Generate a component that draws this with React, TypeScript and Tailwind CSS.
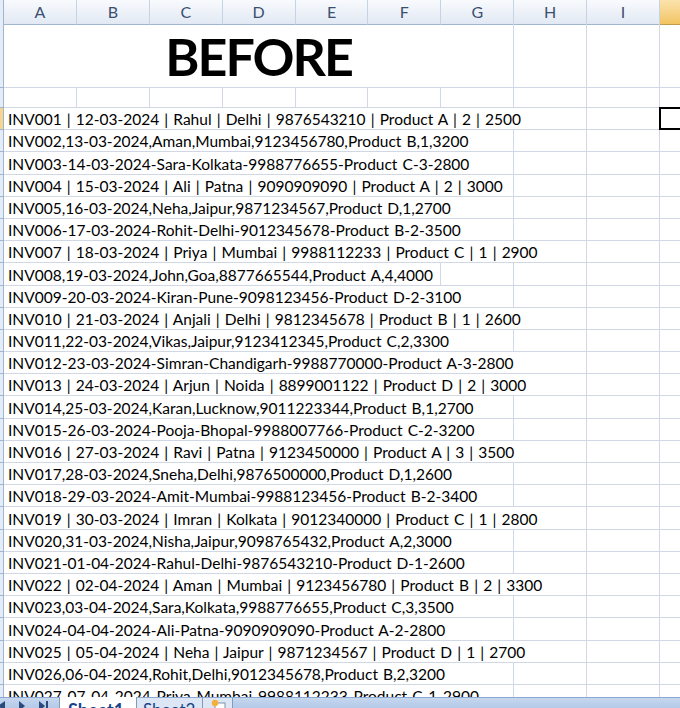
import React from 'react';

const COLS = ['A', 'B', 'C', 'D', 'E', 'F', 'G', 'H', 'I'];

const ROWS = [
  'INV001 | 12-03-2024 | Rahul | Delhi | 9876543210 | Product A | 2 | 2500',
  'INV002,13-03-2024,Aman,Mumbai,9123456780,Product B,1,3200',
  'INV003-14-03-2024-Sara-Kolkata-9988776655-Product C-3-2800',
  'INV004 | 15-03-2024 | Ali | Patna | 9090909090 | Product A | 2 | 3000',
  'INV005,16-03-2024,Neha,Jaipur,9871234567,Product D,1,2700',
  'INV006-17-03-2024-Rohit-Delhi-9012345678-Product B-2-3500',
  'INV007 | 18-03-2024 | Priya | Mumbai | 9988112233 | Product C | 1 | 2900',
  'INV008,19-03-2024,John,Goa,8877665544,Product A,4,4000',
  'INV009-20-03-2024-Kiran-Pune-9098123456-Product D-2-3100',
  'INV010 | 21-03-2024 | Anjali | Delhi | 9812345678 | Product B | 1 | 2600',
  'INV011,22-03-2024,Vikas,Jaipur,9123412345,Product C,2,3300',
  'INV012-23-03-2024-Simran-Chandigarh-9988770000-Product A-3-2800',
  'INV013 | 24-03-2024 | Arjun | Noida | 8899001122 | Product D | 2 | 3000',
  'INV014,25-03-2024,Karan,Lucknow,9011223344,Product B,1,2700',
  'INV015-26-03-2024-Pooja-Bhopal-9988007766-Product C-2-3200',
  'INV016 | 27-03-2024 | Ravi | Patna | 9123450000 | Product A | 3 | 3500',
  'INV017,28-03-2024,Sneha,Delhi,9876500000,Product D,1,2600',
  'INV018-29-03-2024-Amit-Mumbai-9988123456-Product B-2-3400',
  'INV019 | 30-03-2024 | Imran | Kolkata | 9012340000 | Product C | 1 | 2800',
  'INV020,31-03-2024,Nisha,Jaipur,9098765432,Product A,2,3000',
  'INV021-01-04-2024-Rahul-Delhi-9876543210-Product D-1-2600',
  'INV022 | 02-04-2024 | Aman | Mumbai | 9123456780 | Product B | 2 | 3300',
  'INV023,03-04-2024,Sara,Kolkata,9988776655,Product C,3,3500',
  'INV024-04-04-2024-Ali-Patna-9090909090-Product A-2-2800',
  'INV025 | 05-04-2024 | Neha | Jaipur | 9871234567 | Product D | 1 | 2700',
  'INV026,06-04-2024,Rohit,Delhi,9012345678,Product B,2,3200',
  'INV027-07-04-2024-Priya-Mumbai-9988112233-Product C-1-2900',
];

const gridCols = 'grid grid-cols-[4px_repeat(9,72.9px)_1fr]';

function RowHead({ active }: { active?: boolean }) {
  return (
    <div
      className={
        'border-r border-b border-[#9eb6ce] ' +
        (active ? 'bg-[#f8d58f]' : 'bg-[#e4ecf7]')
      }
    />
  );
}

function Cells() {
  return (
    <>
      {COLS.map((c) => (
        <div key={c} className="border-r border-b border-[#d0d7e5]" />
      ))}
    </>
  );
}

function DataRow({ text, index }: { text: string; index: number }) {
  const first = index === 0;
  return (
    <div className={gridCols + ' h-[22.2px] shrink-0'}>
      <div className="col-start-1 row-start-1 flex">
        <div className={'flex-1 border-r border-b border-[#9eb6ce] ' + (first ? 'bg-[#f8d58f]' : 'bg-[#e4ecf7]')} />
      </div>
      {COLS.map((c, i) => (
        <div
          key={c}
          className="row-start-1 border-r border-b border-[#d0d7e5]"
          style={{ gridColumnStart: i + 2 }}
        />
      ))}
      <div className="col-start-11 row-start-1 border-b border-[#d0d7e5] relative">
        {first && <div className="absolute -top-px -left-px w-[40px] -bottom-px border-2 border-black" />}
      </div>
      <div className="col-start-2 col-end-12 row-start-1 justify-self-start mb-px bg-white relative z-10 pl-[4px] pr-px flex items-end whitespace-nowrap text-[15.5px] leading-[20px] [word-spacing:1.15px] text-black">
        {text}
      </div>
    </div>
  );
}

export default function App() {
  return (
    <div className="w-[680px] h-[708px] overflow-hidden bg-white flex flex-col font-['Lato','Noto_Sans',sans-serif]">
      <div className="h-[697px] shrink-0 overflow-hidden flex flex-col">
        {/* column headers */}
        <div className={gridCols + ' h-[22px] shrink-0'}>
          <div className="bg-[#e4ecf7] border-r border-b border-[#9eb6ce]" />
          {COLS.map((c) => (
            <div
              key={c}
              className="bg-gradient-to-b from-[#f8fafd] to-[#e2e9f4] border-r border-b border-[#9eb6ce] border-r-[#c5d3e4] flex items-center justify-center text-[16px] text-[#3a5070]"
            >
              {c}
            </div>
          ))}
          <div className="bg-gradient-to-b from-[#fbe3ad] to-[#f2c460] border-b border-[#c29a4b]" />
        </div>

        {/* title row (A1:G1 merged) */}
        <div className={gridCols + ' h-[66px] shrink-0'}>
          <RowHead />
          <div className="col-start-2 col-end-9 border-r border-b border-[#d0d7e5] flex items-center justify-center pt-[3px]">
            <span className="font-['Lato','Open_Sans',sans-serif] font-bold text-[52px] leading-none tracking-[-2px] text-black">
              BEFORE
            </span>
          </div>
          <div className="border-r border-b border-[#d0d7e5]" />
          <div className="border-r border-b border-[#d0d7e5]" />
          <div className="border-b border-[#d0d7e5]" />
        </div>

        {/* empty row 2 */}
        <div className={gridCols + ' h-[20px] shrink-0'}>
          <RowHead />
          <Cells />
          <div className="border-b border-[#d0d7e5]" />
        </div>

        {ROWS.map((r, i) => (
          <DataRow key={i} text={r} index={i} />
        ))}
      </div>

      {/* sheet tabs */}
      <div className="h-[20px] shrink-0 flex items-start bg-gradient-to-b from-[#c6d7ee] to-[#a3bde2] border-t border-[#8aa8d2]">
        <div className="w-[62px] h-full flex items-start pt-[3px] gap-[12px] -ml-[3px] text-[#2a4a7e]">
          <svg width="9" height="10" viewBox="0 0 9 10"><path d="M8 0 L1 5 L8 10 Z" fill="currentColor" /></svg>
          <svg width="8" height="10" viewBox="0 0 8 10"><path d="M1 0 L7 5 L1 10 Z" fill="currentColor" /></svg>
          <svg width="11" height="10" viewBox="0 0 11 10"><path d="M1 0 L7 5 L1 10 Z" fill="currentColor" /><rect x="8" y="0" width="2" height="10" fill="currentColor" /></svg>
        </div>
        <div className="h-full w-[78px] pl-[8px] bg-white border-x border-[#7f9db9] -mt-px flex items-start">
          <span className="text-[18px] font-bold text-[#15428b] leading-[20px] mt-[3px]">Sheet1</span>
        </div>
        <div className="h-full w-[66px] pl-[6px] bg-[#dce6f4] border-r border-[#7f9db9] flex items-start">
          <span className="text-[17px] text-[#15428b] leading-[20px] mt-[2px]">Sheet2</span>
        </div>
        <div className="h-full w-[30px] bg-[#dce6f4] border-r border-[#7f9db9] flex items-start justify-center pt-[1px]">
          <svg width="18" height="14" viewBox="0 0 18 14">
            <rect x="6" y="4" width="10" height="10" fill="#fff" stroke="#7f8fa8" />
            <circle cx="6" cy="4" r="3.2" fill="#f4b03a" />
          </svg>
        </div>
      </div>
    </div>
  );
}
